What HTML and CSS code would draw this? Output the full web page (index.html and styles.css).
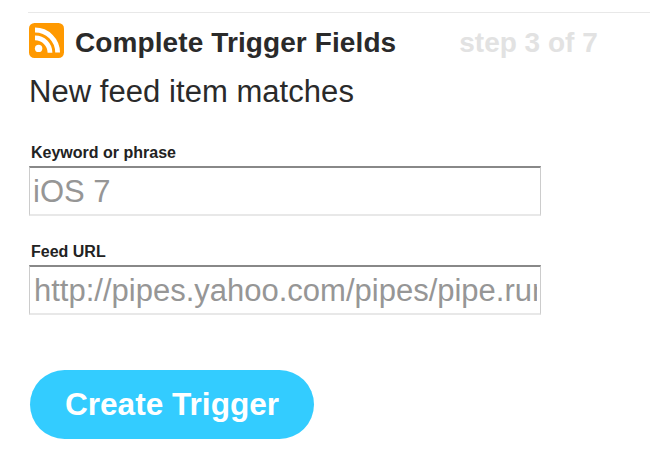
FILE: index.html
```html
<!DOCTYPE html>
<html lang="en">

<head>
    <link rel="stylesheet" href="styles.css">
    <title>Complete Trigger Fields</title>
</head>

<body>
    <div class="page">
        <div class="header">
            <svg class="feed-icon" viewBox="0 0 35 35">
                <rect width="35" height="35" rx="5.5" fill="#ff9900" />
                <circle cx="9.6" cy="25.4" r="3.7" fill="#fff" />
                <path d="M6 14.8a15 15 0 0 1 15 15" fill="none" stroke="#fff" stroke-width="4.8" />
                <path d="M6 7a22.6 22.6 0 0 1 22.6 22.6" fill="none" stroke="#fff" stroke-width="4.8" />
            </svg>
            <h1 class="title">Complete Trigger Fields</h1>
            <span class="step">step 3 of 7</span>
        </div>
        <h2 class="subtitle">New feed item matches</h2>
        <form class="fields">
            <div class="field">
                <label class="field-label">Keyword or phrase</label>
                <input class="field-input" type="text" value="iOS 7">
            </div>
            <div class="field">
                <label class="field-label">Feed URL</label>
                <input class="field-input field-input-url" type="text" value="http://pipes.yahoo.com/pipes/pipe.run?_id=1">
            </div>
            <button class="create-button" type="button">Create Trigger</button>
        </form>
    </div>
</body>

</html>
```

FILE: styles.css
```css
* {
    box-sizing: border-box;
    margin: 0;
    padding: 0;
}

body {
    background: white;
    color: #222;
    font-family: "Liberation Sans", Arial, sans-serif;
}

.page {
    margin-top: 12px;
    margin-left: 28px;
    padding-top: 10px;
    padding-left: 1px;
    border-top: 1px solid #e8e8e8;
}

.header {
    display: flex;
    align-items: center;
    height: 35px;
}

.feed-icon {
    width: 35px;
    height: 35px;
    flex-shrink: 0;
}

.title {
    margin-top: 4px;
    margin-left: 11px;
    font-size: 28px;
    letter-spacing: 0.1px;
    font-weight: bold;
    color: #2a2a2a;
}

.step {
    margin-top: 4px;
    margin-left: 63px;
    font-size: 28px;
    font-weight: bold;
    color: #e2e2e2;
}

.subtitle {
    margin-top: 16px;
    font-size: 31px;
    letter-spacing: 0.05px;
    line-height: 36px;
    font-weight: normal;
    color: #2a2a2a;
}

.fields {
    display: flex;
    flex-direction: column;
    align-items: flex-start;
    margin-top: 35px;
}

.field {
    margin-bottom: 28px;
}

.field-label {
    display: block;
    margin-left: 2px;
    margin-bottom: 5px;
    font-size: 16px;
    line-height: 16px;
    font-weight: bold;
}

.field-input {
    display: block;
    width: 512px;
    height: 50px;
    padding: 2px 3px 0;
    border: 1px solid #ccc;
    border-top: 2px solid #888;
    border-bottom: 2px solid #e8e8e8;
    font-family: inherit;
    font-size: 31px;
    color: #969696;
}

.field-input-url {
    padding-left: 4px;
}

.create-button {
    width: 284px;
    height: 69px;
    margin-top: 27px;
    margin-left: 1px;
    border: none;
    border-radius: 35px;
    background: #33ccff;
    color: white;
    font-family: inherit;
    font-size: 31.6px;
    font-weight: bold;
}
```
